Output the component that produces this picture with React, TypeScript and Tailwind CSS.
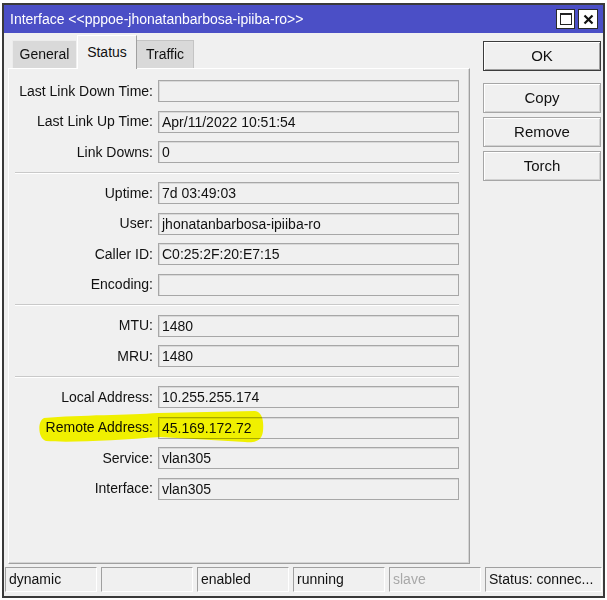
const groups: [string, string][][] = [
  [
    ["Last Link Down Time", ""],
    ["Last Link Up Time", "Apr/11/2022 10:51:54"],
    ["Link Downs", "0"],
  ],
  [
    ["Uptime", "7d 03:49:03"],
    ["User", "jhonatanbarbosa-ipiiba-ro"],
    ["Caller ID", "C0:25:2F:20:E7:15"],
    ["Encoding", ""],
  ],
  [
    ["MTU", "1480"],
    ["MRU", "1480"],
  ],
  [
    ["Local Address", "10.255.255.174"],
    ["Remote Address", "45.169.172.72"],
    ["Service", "vlan305"],
    ["Interface", "vlan305"],
  ],
];

const statusCells = [
  { text: "dynamic", dim: false, w: "w-[92px]" },
  { text: "", dim: false, w: "w-[92px]" },
  { text: "enabled", dim: false, w: "w-[92px]" },
  { text: "running", dim: false, w: "w-[92px]" },
  { text: "slave", dim: true, w: "w-[92px]" },
  { text: "Status: connec...", dim: false, w: "flex-1" },
];

const Field = ({ label, value }: { label: string; value: string }) => (
  <div className="flex items-center gap-[5px] h-[22px]">
    <div className="w-[144px] text-right whitespace-nowrap">{label}:</div>
    <div className="flex-1 h-[22px] border border-[#a7a7a7] shadow-[inset_1px_1px_0_#d9d9d9] pl-[3px] leading-[20px] whitespace-nowrap">
      {value}
    </div>
  </div>
);

const Separator = () => (
  <div className="ml-[6px] my-[8.5px] h-[2px] border-t border-[#c9c9c9] border-b border-b-white" />
);

const SideButton = ({ title, isDefault }: { title: string; isDefault?: boolean }) => (
  <div
    className={
      isDefault
        ? "h-[30px] flex items-center justify-center text-[15px] border border-[#3c3c3c] shadow-[inset_1px_1px_0_#ffffff,inset_-1px_-1px_0_#a0a0a0]"
        : "h-[30px] flex items-center justify-center text-[15px] border border-[#a6a6a6] shadow-[inset_1px_1px_0_#ffffff,inset_-1px_-1px_0_#d2d2d2]"
    }
  >
    {title}
  </div>
);

const App = () => {
  return (
    <div className="relative w-[607px] h-[600px] bg-white pt-[3px] pl-[2px] pr-[2px] pb-[2px] text-[14px] text-[#111] font-['Liberation_Sans',Arial,sans-serif]">
      <div className="h-full flex flex-col border-2 border-[#3a3a3a] bg-[#f0f0f0]">
        {/* title bar */}
        <div className="h-[28px] bg-[#4b4fc6] flex items-center justify-between pl-[6px] pr-[5px]">
          <span className="text-white whitespace-nowrap">Interface &lt;&lt;pppoe-jhonatanbarbosa-ipiiba-ro&gt;&gt;</span>
          <div className="flex gap-[3px]">
            <div className="w-[19px] h-[20px] bg-white border border-[#2a2a2a] flex items-center justify-center">
              <div className="w-[12px] h-[12px] border border-[#222] border-t-2" />
            </div>
            <div className="w-[20px] h-[20px] bg-white border border-[#2a2a2a] flex items-center justify-center">
              <svg width="11" height="11" viewBox="0 0 11 11">
                <path d="M1.5 1.5 L9.5 9.5 M9.5 1.5 L1.5 9.5" stroke="#111" strokeWidth="2.2" />
              </svg>
            </div>
          </div>
        </div>

        {/* body */}
        <div className="flex-1 flex pt-[2px] pb-[3px] pl-[4px]">
          <div className="w-[462px] flex flex-col">
            <div className="flex items-end h-[33px] pl-[4px]">
              <div className="w-[64px] h-[28px] bg-[#d9d9d9] border-t border-l border-[#ececec] flex items-center justify-center">
                General
              </div>
              <div className="relative z-10 -mb-px ml-[1px] w-[60px] h-[34px] bg-[#f0f0f0] border-t border-l border-white border-r border-r-[#a0a0a0] flex items-center justify-center">
                Status
              </div>
              <div className="w-[57px] h-[28px] bg-[#d9d9d9] border-t border-r border-[#c4c4c4] flex items-center justify-center">
                Traffic
              </div>
            </div>
            <div className="flex-1 border-t border-l border-white border-r border-b border-r-[#a0a0a0] border-b-[#a0a0a0] shadow-[inset_-1px_-1px_0_#d4d4d4] pt-[11px] pr-[10px]">
              {groups.map((group, gi) => (
                <div key={gi}>
                  {gi > 0 && <Separator />}
                  <div className="flex flex-col gap-[8.5px]">
                    {group.map(([label, value]) => (
                      <Field key={label} label={label} value={value} />
                    ))}
                  </div>
                </div>
              ))}
            </div>
          </div>

          <div className="ml-[13px] w-[118px] pt-[6px] flex flex-col">
            <SideButton title="OK" isDefault />
            <div className="mt-[12px] flex flex-col gap-[4px]">
              <SideButton title="Copy" />
              <SideButton title="Remove" />
              <SideButton title="Torch" />
            </div>
          </div>
        </div>

        {/* status bar */}
        <div className="h-[29px] flex gap-[4px] pl-[1px] pr-[1px] pb-[4px]">
          {statusCells.map((c, i) => (
            <div
              key={i}
              className={`${c.w} h-[25px] border-t border-l border-[#a0a0a0] border-r border-b border-r-white border-b-white pl-[3px] leading-[23px] whitespace-nowrap ${c.dim ? "text-[#a8a8a8]" : ""}`}
            >
              {c.text}
            </div>
          ))}
        </div>
      </div>

      {/* highlighter mark */}
      <svg className="absolute inset-0 pointer-events-none mix-blend-multiply" width="607" height="600">
        <path
          d="M44 418 C80 415 130 415 158 413 L255 411 C262 412 264 420 263 431 C262 441 255 443 245 442 L160 437 C120 440 70 443 46 441 C38 439 37 421 44 418 Z"
          fill="#ffff00"
        />
      </svg>
    </div>
  );
};

export default App;
